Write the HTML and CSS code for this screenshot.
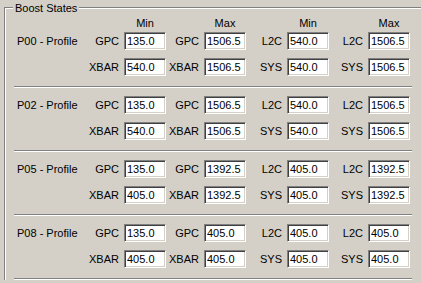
FILE: index.html
```html
<!DOCTYPE html>
<html lang="en">
	<head>
		<meta charset="UTF-8" />
		<title>Boost States</title>
		<link rel="stylesheet" href="styles.css">
	</head>
	<body>
		<div class="group">
			<span class="group-title">Boost States</span>

			<div class="grid head">
				<span class="col-min1">Min</span>
				<span class="col-max1">Max</span>
				<span class="col-min2">Min</span>
				<span class="col-max2">Max</span>
			</div>

			<div class="grid rows">
				<span class="name">P00 - Profile</span>
				<span class="lbl">GPC</span><input class="field" value="135.0">
				<span class="lbl">GPC</span><input class="field" value="1506.5">
				<span class="lbl">L2C</span><input class="field" value="540.0">
				<span class="lbl">L2C</span><input class="field" value="1506.5">
				<span></span>
				<span class="lbl">XBAR</span><input class="field" value="540.0">
				<span class="lbl">XBAR</span><input class="field" value="1506.5">
				<span class="lbl">SYS</span><input class="field" value="540.0">
				<span class="lbl">SYS</span><input class="field" value="1506.5">
			</div>
			<div class="sep"></div>

			<div class="grid rows">
				<span class="name">P02 - Profile</span>
				<span class="lbl">GPC</span><input class="field" value="135.0">
				<span class="lbl">GPC</span><input class="field" value="1506.5">
				<span class="lbl">L2C</span><input class="field" value="540.0">
				<span class="lbl">L2C</span><input class="field" value="1506.5">
				<span></span>
				<span class="lbl">XBAR</span><input class="field" value="540.0">
				<span class="lbl">XBAR</span><input class="field" value="1506.5">
				<span class="lbl">SYS</span><input class="field" value="540.0">
				<span class="lbl">SYS</span><input class="field" value="1506.5">
			</div>
			<div class="sep"></div>

			<div class="grid rows">
				<span class="name">P05 - Profile</span>
				<span class="lbl">GPC</span><input class="field" value="135.0">
				<span class="lbl">GPC</span><input class="field" value="1392.5">
				<span class="lbl">L2C</span><input class="field" value="405.0">
				<span class="lbl">L2C</span><input class="field" value="1392.5">
				<span></span>
				<span class="lbl">XBAR</span><input class="field" value="405.0">
				<span class="lbl">XBAR</span><input class="field" value="1392.5">
				<span class="lbl">SYS</span><input class="field" value="405.0">
				<span class="lbl">SYS</span><input class="field" value="1392.5">
			</div>
			<div class="sep"></div>

			<div class="grid rows">
				<span class="name">P08 - Profile</span>
				<span class="lbl">GPC</span><input class="field" value="135.0">
				<span class="lbl">GPC</span><input class="field" value="405.0">
				<span class="lbl">L2C</span><input class="field" value="405.0">
				<span class="lbl">L2C</span><input class="field" value="405.0">
				<span></span>
				<span class="lbl">XBAR</span><input class="field" value="405.0">
				<span class="lbl">XBAR</span><input class="field" value="405.0">
				<span class="lbl">SYS</span><input class="field" value="405.0">
				<span class="lbl">SYS</span><input class="field" value="405.0">
			</div>
			<div class="sep last"></div>
		</div>
	</body>
</html>
```

FILE: styles.css
```css
body {
	margin: 0;
	background: #d4d0c8;
	font-family: "Liberation Sans", Arial, sans-serif;
	font-size: 11px;
	color: #000;
	overflow: hidden;
}
/* box continues past the window: right and bottom edges are cut off */
.group {
	position: relative;
	margin: 7px 0 0 4px;
	width: 416px;
	padding: 9px 0 0;
	border: 1px solid #808080;
	border-right: none;
	border-bottom: none;
	box-shadow: inset 1px 1px 0 #fff;
}
.group-title {
	position: absolute;
	top: -6px;
	left: 8px;
	padding: 0 2px;
	line-height: 13px;
	background: #d4d0c8;
}
.grid {
	display: grid;
	grid-template-columns: 69px 38px 42px 38px 42px 41px 42px 39px 42px;
	margin-left: 12px;
}
.head {
	line-height: 13px;
	margin-bottom: 2px;
	text-align: center;
}
.col-min1 { grid-column: 3; }
.col-max1 { grid-column: 5; }
.col-min2 { grid-column: 7; }
.col-max2 { grid-column: 9; }
.rows {
	grid-template-rows: 18px 18px;
	row-gap: 8px;
	align-items: center;
	padding-bottom: 10px;
}
.name {
	white-space: nowrap;
}
.lbl {
	text-align: right;
	padding-right: 5px;
}
.field {
	width: 42px;
	height: 18px;
	box-sizing: border-box;
	margin: 0;
	padding: 0 0 0 2px;
	border: 1px solid;
	border-color: #808080 #fff #fff #808080;
	box-shadow: inset 1px 1px 0 #404040, inset -1px -1px 0 #d4d0c8;
	background: #fff;
	font: 11px "Liberation Sans", Arial, sans-serif;
	color: #000;
	outline: none;
}
.sep {
	width: 398px;
	margin: 0 0 8px 9px;
	border-top: 1px solid #808080;
	border-bottom: 1px solid #fff;
}
.sep.last {
	margin-bottom: 0;
}
```
